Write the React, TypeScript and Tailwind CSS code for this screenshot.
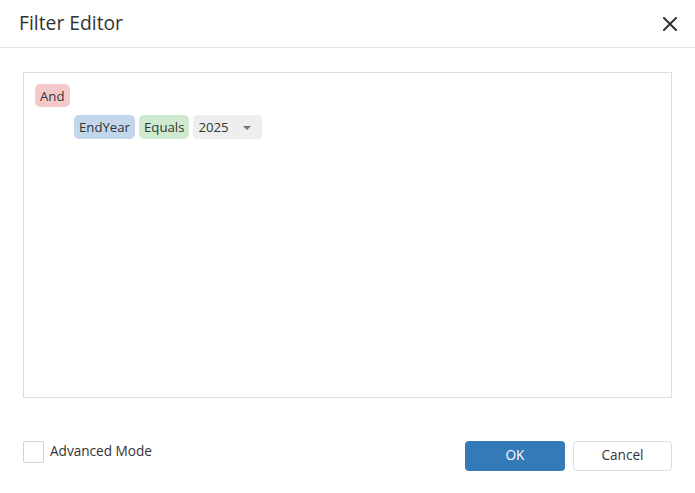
import { useState } from "react";

const FONT = "font-['Segoe_UI','Open_Sans','Noto_Sans',sans-serif]";

function Chip({ label, color }: { label: string; color: string }) {
  return (
    <span className={`inline-flex h-[24px] items-center rounded-[5px] px-[5px] pt-[1px] text-[13.2px] leading-none text-[#333] ${color}`}>
      {label}
    </span>
  );
}

export default function App() {
  const [advanced, setAdvanced] = useState(false);

  return (
    <div className={`w-[695px] h-[493px] bg-white text-[#333] ${FONT}`}>
      {/* Header */}
      <div className="flex h-[48px] items-center justify-between border-b border-[#e2e2e2] pl-[19px] pr-[15px]">
        <span className="pb-[2px] text-[19.3px] leading-none text-[#333]">Filter Editor</span>
        <button className="flex h-[20px] w-[20px] items-center justify-center">
          <svg width="14" height="14" viewBox="0 0 14 14">
            <path d="M1 1 L13 13 M13 1 L1 13" stroke="#333" strokeWidth="2" strokeLinecap="square" />
          </svg>
        </button>
      </div>

      {/* Filter tree */}
      <div className="px-[23px] pt-[24px]">
        <div className="h-[326px] border border-[#dddddd] pl-[11px] pt-[11px]">
          <div className="flex">
            <span className="inline-flex h-[23px] items-center rounded-[5px] bg-[#f5c9c9] px-[5px] pt-[2px] text-[13.2px] leading-none text-[#333]">
              And
            </span>
          </div>
          <div className="mt-[8px] flex gap-[4px] pl-[39px]">
            <Chip label="EndYear" color="bg-[#c2d7eb]" />
            <Chip label="Equals" color="bg-[#d0ead0]" />
            <span className="inline-flex h-[24px] w-[69px] items-center justify-between rounded-[4px] bg-[#eeeeee] pt-[1px] pl-[5px] pr-[11px] text-[13.2px] leading-none text-[#333]">
              2025
              <svg width="8" height="4" viewBox="0 0 8 4">
                <path d="M0 0 L8 0 L4 4 Z" fill="#777" />
              </svg>
            </span>
          </div>
        </div>
      </div>

      {/* Footer */}
      <div className="flex items-start justify-between px-[23px] pt-[43px]">
        <label className="flex cursor-pointer items-center gap-[6px]" onClick={() => setAdvanced(!advanced)}>
          <span className="h-[22px] w-[21px] rounded-[2px] border border-[#d4d4d4] bg-white" />
          <span className="pb-[3px] text-[13.6px] leading-none text-[#333]">Advanced Mode</span>
        </label>
        <div className="flex gap-[8px]">
          <button className="flex h-[30px] w-[100px] items-center justify-center rounded-[4px] bg-[#337ab7] pb-[2px] text-[13.6px] leading-none text-white">
            OK
          </button>
          <button className="flex h-[30px] w-[99px] items-center justify-center rounded-[4px] border border-[#dddddd] bg-white pb-[2px] text-[13.6px] leading-none text-[#333]">
            Cancel
          </button>
        </div>
      </div>
    </div>
  );
}
